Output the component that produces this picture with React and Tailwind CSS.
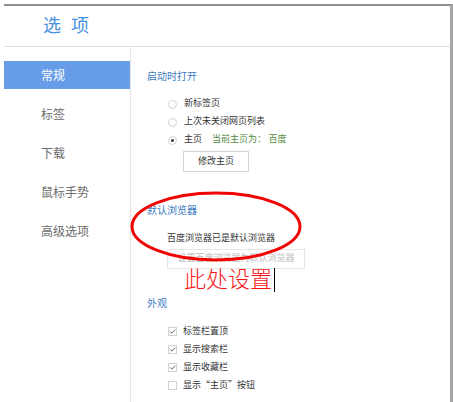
import React from "react";

const navItems = ["常规", "标签", "下载", "鼠标手势", "高级选项"];

const looks = [
  { label: "标签栏置顶", checked: true },
  { label: "显示搜索栏", checked: true },
  { label: "显示收藏栏", checked: true },
  { label: "显示“主页”按钮", checked: false },
];

const Heading = ({ children }) => (
  <h2 className="text-[10px] leading-4 text-[#3a7cc0]">{children}</h2>
);

const Radio = ({ label, checked, children }) => (
  <div className="flex items-center h-[18px]">
    <label className="flex items-center gap-[7px]">
      <input
        type="radio"
        name="startup"
        defaultChecked={checked}
        className="appearance-none w-[9px] h-[9px] shrink-0 rounded-full border border-[#d2d2d2] bg-white checked:bg-[radial-gradient(circle,#444_0_1px,white_2px)]"
      />
      {label}
    </label>
    {children}
  </div>
);

const Check = ({ label, checked }) => (
  <label className="flex items-center gap-1.5 h-[18px] font-['Noto_Sans_CJK_SC',sans-serif]">
    <span className="grid w-[9px] h-[9px] shrink-0">
      <input
        type="checkbox"
        defaultChecked={checked}
        className="peer col-start-1 row-start-1 appearance-none w-[9px] h-[9px] border border-[#d2d2d2] bg-white"
      />
      <svg
        viewBox="0 0 9 9"
        className="col-start-1 row-start-1 w-[9px] h-[9px] pointer-events-none hidden peer-checked:block"
        fill="none"
        stroke="#666"
        strokeWidth="1"
      >
        <path d="M2 4.3 L3.8 6.2 L7.2 2.6" />
      </svg>
    </span>
    {label}
  </label>
);

const App = () => {
  return (
    <div className="min-h-screen pt-1 pl-1 bg-white flex flex-col font-['Liberation_Sans','Noto_Sans_CJK_SC',sans-serif] text-[9px] text-[#333]">
      <div className="grow flex flex-col border-t-2 border-t-[#8f8f93] border-r-3 border-r-[#a6a6a6]">
        <header className="h-[41px] flex items-center pl-[39px] border-b border-[#dedede]">
          <h1 className="text-lg leading-6 text-[#4690e4]">选&nbsp;&nbsp;项</h1>
        </header>

        <div className="grow flex">
          <nav className="w-[127px] shrink-0 pt-3.5 border-r border-[#e4e4e4] flex flex-col gap-[11px] text-xs">
            {navItems.map((item, i) => (
              <a
                key={item}
                href="#"
                className={
                  i === 0
                    ? "h-7 flex items-center pt-px pl-[37px] bg-[#679ce8] text-white"
                    : "h-7 flex items-center pt-px pl-[37px] text-[#6b6b6b]"
                }
              >
                {item}
              </a>
            ))}
          </nav>

          <main className="grow pt-[22px] pl-4">
            <section>
              <Heading>启动时打开</Heading>
              <div className="mt-2.5 pl-[21px]">
                <Radio label="新标签页" />
                <Radio label="上次未关闭网页列表" />
                <Radio label="主页" checked>
                  <span className="ml-2.5 text-[#4f8a3c]">
                    当前主页为：&nbsp;百度
                  </span>
                </Radio>
                <button className="mt-0.5 ml-[15px] w-[66px] h-[21px] flex items-center justify-center border border-[#d4d4d4] bg-white">
                  修改主页
                </button>
              </div>
            </section>

            <section className="relative mt-[31px]">
              <Heading>默认浏览器</Heading>
              <div className="mt-2.5 pl-5">
                <p className="leading-[18px]">百度浏览器已是默认浏览器</p>
                <button
                  disabled
                  className="mt-0.5 w-[138px] h-5 flex items-center justify-center border border-[#e6e6e6] bg-white text-[#bdbdbd]"
                >
                  设置百度浏览器为默认浏览器
                </button>
              </div>

              {/* red hand marking over the section */}
              <svg
                viewBox="0 0 172 71"
                className="absolute -left-[17px] -top-3 w-[172px] h-[71px] pointer-events-none"
                fill="none"
                stroke="#f00505"
                strokeWidth="3"
              >
                <ellipse cx="86" cy="35.5" rx="84" ry="33.5" />
              </svg>
              <p className="absolute left-[37px] top-[65px] flex h-6 items-center border-r border-black pr-0.5 text-[22px] leading-6 font-light text-[#f91414] whitespace-nowrap">
                此处设置
              </p>
            </section>

            <section className="mt-[27px]">
              <Heading>外观</Heading>
              <div className="mt-2.5 pl-[21px]">
                {looks.map((item) => (
                  <Check key={item.label} {...item} />
                ))}
              </div>
            </section>
          </main>
        </div>
      </div>
    </div>
  );
};

export default App;
